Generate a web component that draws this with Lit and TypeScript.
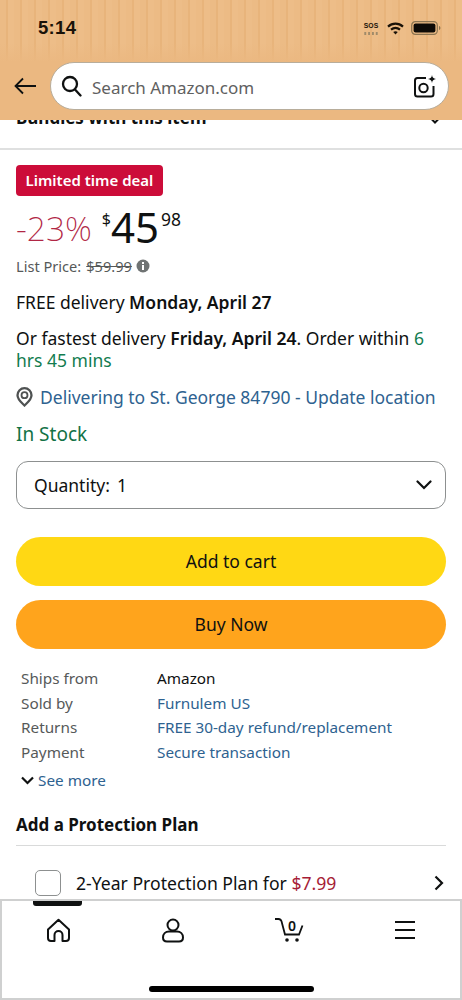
import { LitElement, html, css } from "lit";
import { customElement } from "lit/decorators.js";

@customElement("app-root")
export class AppRoot extends LitElement {
  static styles = css`
    :host { display: block; width: 462px; height: 1000px; overflow: hidden; background: #fff; color: #0f1111;
      font-family: "Noto Sans", "Open Sans", sans-serif; font-size: 18px; }
    * { box-sizing: border-box; }
    .page { height: 1000px; display: flex; flex-direction: column; }
    .head { height: 120px; flex: none; background: #ebb881; display: flex; flex-direction: column; }
    .status { height: 62px; padding: 18px 21px 0 38px; display: flex; justify-content: space-between;
      background: linear-gradient(180deg, transparent 70%, #ebb881 100%), repeating-linear-gradient(90deg, #ecbb85 0 6px, #e8b47b 6px 8px, #edbd88 8px 14px); }
    .time { font: 700 18.5px "Liberation Sans", sans-serif; line-height: 20px; color: #1a1208; letter-spacing: .3px; }
    .sys { display: flex; align-items: center; gap: 7px; height: 20px; }
    .sos { font: 700 8px/8px "Liberation Sans", sans-serif; transform: scaleX(.85); display: flex; flex-direction: column; align-items: center; color: #1a1208; width: 18px; }
    .dots { width: 18px; height: 3px; margin-top: 2px; background: radial-gradient(circle, #a08b6a 1.2px, transparent 1.4px) 0 0 / 4.5px 3px; }
    .search-row { display: flex; align-items: center; padding-left: 14px; gap: 14px; }
    .field { width: 399px; height: 48px; border-radius: 24px; background: #fff; border: 1.5px solid #b8ad9b; display: flex; align-items: center; padding: 0 11px 0 10px; gap: 10px; }
    .ph { flex: 1; color: #5f6161; font-size: 17px; padding-top: 3px; }
    main { flex: 1; min-height: 0; overflow: hidden; }
    .cut { height: 30px; border-bottom: 2px solid #dfe0e0; overflow: hidden; padding: 0 21px 0 16px; display: flex; justify-content: space-between; }
    .cut b { margin-top: -12px; font-size: 17px; line-height: 20px; font-weight: 700; }
    .body { padding: 15px 16px 0; }
    .badge { display: inline-block; background: #cc0c39; color: #fff; font-size: 15px; font-weight: 600; height: 31px; line-height: 31px; padding: 0 9.5px; border-radius: 4px; }
    .price { display: flex; align-items: flex-start; height: 46px; margin-top: 7px; }
    .off { font-size: 33.5px; font-weight: 200; color: #b12745; line-height: 42px; margin-top: 4px; margin-right: 10px; }
    .cur { font-size: 16px; line-height: 18px; margin-top: 7px; margin-right: 0; }
    .big { font-size: 42px; line-height: 46px; margin-top: 1px; }
    .cents { font-size: 17.5px; line-height: 18px; margin-top: 7px; margin-left: 2px; }
    .list { display: flex; align-items: center; margin-top: 7px; font-size: 14.6px; line-height: 20px; color: #565959; gap: 4px; }
    .list s { margin-left: 1px; }
    .line { margin-top: 15px; line-height: 22px; font-size: 17.5px; }
    .line b { font-weight: 600; }
    .line2 { margin-top: 14px; }
    .green { color: #127c4f; }
    .loc { display: flex; align-items: center; gap: 7px; margin-top: 14px; color: #2e6290; font-size: 17.5px; line-height: 24px; white-space: nowrap; }
    .stock { color: #127246; font-size: 19px; line-height: 26px; margin-top: 12px; }
    .qty { margin-top: 14px; height: 48px; border: 1.5px solid #8d9090; border-radius: 12px; display: flex; align-items: center; justify-content: space-between; padding: 0 13px 0 17px; font-size: 17.5px; }
    .qty .lab { padding-bottom: 1px; }
    .qty span span { margin-left: 7px; }
    .btn { height: 49px; border-radius: 25px; display: flex; align-items: center; justify-content: center; font-size: 17.5px; padding-bottom: 2px; }
    .cart { background: #ffd814; margin-top: 28px; }
    .buy { background: #ffa41c; margin-top: 14px; }
    .info { margin-top: 17px; padding-left: 5px; display: grid; grid-template-columns: 136px 1fr; font-size: 15.3px; line-height: 24.5px; }
    .info .k { color: #565959; }
    .link { color: #2e6290; }
    .more { margin: 4px 0 0 5px; display: flex; align-items: center; gap: 4px; font-size: 15.3px; line-height: 24px; color: #2e6290; }
    h2 { margin: 20px 0 0; font-size: 17px; line-height: 26px; font-weight: 700; }
    hr { margin: 7px 0 0; border: 0; height: 1px; background: #d9dada; }
    .plan { display: flex; align-items: center; margin-top: 23px; padding-left: 19px; padding-right: 2px; font-size: 17.6px; height: 28px; }
    .box { width: 26px; height: 26px; border: 1.5px solid #8d9090; border-radius: 5px; margin-right: 15px; flex: none; }
    .plan .t { flex: 1; }
    .red { color: #a61c36; }
    nav { height: 101px; flex: none; border: 2px solid #cfd0d0; background: #fff; position: relative; }
    .ind { position: absolute; left: 31px; top: 0; width: 49px; height: 5px; background: #0f1111; border-radius: 0 0 3px 3px; }
    nav svg { position: absolute; top: 17px; }
    .homebar { position: absolute; left: 147px; top: 85px; width: 165px; height: 6px; border-radius: 3px; background: #000; }
    svg { display: block; flex: none; }
  `;

  render() {
    return html`<div class="page">
      <header class="head">
        <div class="status">
          <span class="time">5:14</span>
          <div class="sys">
            <div class="sos">SOS<div class="dots"></div></div>
            <svg width="17" height="13" viewBox="0 0 17 13" fill="none"><path d="M1 4.600C5.400.6 11.600.6 16 4.600" stroke="#1a1208" stroke-width="2.200"/><path d="M4 7.600c2.700-2.200 6.300-2.200 9 0" stroke="#1a1208" stroke-width="2.200"/><path d="M6.200 9.900 8.500 12.400l2.300-2.500c-1.300-1-3.300-1-4.600 0Z" fill="#1a1208"/></svg>
            <svg width="30" height="14" viewBox="0 0 30 14" fill="none"><rect x=".7" y=".7" width="25.600" height="12.600" rx="3.600" stroke="#8a7350" stroke-width="1.200"/><rect x="2.600" y="2.600" width="21.800" height="8.800" rx="2" fill="#0d0a06"/><path d="M28 5v4c.9-.3 1.400-1 1.400-2s-.5-1.700-1.400-2Z" fill="#8a7350"/></svg>
          </div>
        </div>
        <div class="search-row">
          <svg width="22" height="18" viewBox="0 0 22 18" fill="none" stroke="#0f1111" stroke-width="1.800"><path d="M22 9H1.500M9 1.500 1.500 9 9 16.500"/></svg>
          <div class="field">
            <svg width="21" height="22" viewBox="0 0 21 22" fill="none" stroke="#0f1111" stroke-width="2.300"><circle cx="9" cy="9" r="7"/><path d="m14 14.500 5.500 6" stroke-linecap="round"/></svg>
            <span class="ph">Search Amazon.com</span>
            <svg width="25" height="25" viewBox="0 0 25 25" fill="none"><path d="M14 4H5.500A2.500 2.500 0 0 0 3 6.500V20a2.500 2.500 0 0 0 2.500 2.500H19a2.500 2.500 0 0 0 2.500-2.500V12" stroke="#0f1111" stroke-width="2"/><circle cx="11.500" cy="14" r="4.200" stroke="#0f1111" stroke-width="2"/><path d="M20 1c.4 2.600 1.400 3.600 4 4-2.600.4-3.600 1.400-4 4-.4-2.600-1.400-3.600-4-4 2.600-.4 3.600-1.400 4-4Z" fill="#0f1111"/></svg>
          </div>
        </div>
      </header>
      <main>
        <div class="cut"><b>Bundles with this item</b>
          <svg style="margin-top:-4px" width="12" height="9" viewBox="0 0 12 9" fill="none" stroke="#0f1111" stroke-width="2"><path d="m1 1.500 5 5 5-5"/></svg></div>
        <div class="body">
          <span class="badge">Limited time deal</span>
          <div class="price"><span class="off">-23%</span><span class="cur">$</span><span class="big">45</span><span class="cents">98</span></div>
          <div class="list"><span>List Price:</span><s>$59.99</s>
            <svg width="14" height="14" viewBox="0 0 14 14"><circle cx="7" cy="7" r="6.500" fill="#6f7373"/><rect x="6" y="6" width="2" height="5" fill="#fff"/><rect x="6" y="3" width="2" height="2" fill="#fff"/></svg></div>
          <div class="line">FREE delivery <b>Monday, April 27</b></div>
          <div class="line line2">Or fastest delivery <b>Friday, April 24</b>. Order within <span class="green">6</span> <span class="green">hrs 45 mins</span></div>
          <div class="loc">
            <svg width="17" height="20" viewBox="0 0 17 20" fill="none"><path d="M8.500 1.200a7 7 0 0 0-7 7c0 4.400 4.500 7.800 7 10.300 2.500-2.500 7-5.900 7-10.300a7 7 0 0 0-7-7Z" stroke="#4f5252" stroke-width="2.300"/><circle cx="8.500" cy="8.200" r="3" stroke="#4f5252" stroke-width="1.800"/></svg>
            <span>Delivering to St. George 84790 - Update location</span></div>
          <div class="stock">In Stock</div>
          <div class="qty"><span class="lab">Quantity:<span>1</span></span>
            <svg width="16" height="10" viewBox="0 0 16 10" fill="none" stroke="#0f1111" stroke-width="2.200"><path d="m1.500 1.500 6.500 6.500 6.500-6.500" stroke-linecap="round"/></svg></div>
          <div class="btn cart">Add to cart</div>
          <div class="btn buy">Buy Now</div>
          <div class="info">
            <span class="k">Ships from</span><span>Amazon</span>
            <span class="k">Sold by</span><span class="link">Furnulem US</span>
            <span class="k">Returns</span><span class="link">FREE 30-day refund/replacement</span>
            <span class="k">Payment</span><span class="link">Secure transaction</span>
          </div>
          <div class="more"><svg width="13" height="9" viewBox="0 0 13 9" fill="none" stroke="#0f1111" stroke-width="2.200"><path d="m1 1.500 5.500 5.500 5.500-5.500"/></svg>See more</div>
          <h2>Add a Protection Plan</h2>
          <hr />
          <div class="plan"><span class="box"></span><span class="t">2-Year Protection Plan for <span class="red">$7.99</span></span>
            <svg width="10" height="16" viewBox="0 0 10 16" fill="none" stroke="#0f1111" stroke-width="2.200"><path d="m1.500 1.500 6.500 6.500-6.500 6.500"/></svg></div>
        </div>
      </main>
      <nav>
        <div class="ind"></div>
        <svg style="left:44px" width="25" height="25" viewBox="0 0 25 25" fill="none" stroke="#0f1111" stroke-width="2" stroke-linejoin="round"><path d="M2 11.500 12.500 1.800 23 11.500V20a3 3 0 0 1-3 3h-3.500v-6a4 4 0 0 0-8 0v6H5a3 3 0 0 1-3-3Z"/></svg>
        <svg style="left:160px" width="22" height="25" viewBox="0 0 22 25" fill="none" stroke="#0f1111" stroke-width="2"><circle cx="11" cy="7" r="5.500"/><path d="M1 19.500c0-3.500 2.500-6 6-6h8c3.500 0 6 2.500 6 6 0 2.500-1.500 4-4 4H5c-2.500 0-4-1.500-4-4Z"/></svg>
        <svg style="left:272px;top:16px" width="30" height="26" viewBox="0 0 30 26" fill="none" stroke="#0f1111" stroke-width="1.800"><path d="M1 2h3.500c1.500 0 2.500.8 3 2.300L11 17.500h14l3.500-9"/><circle cx="13" cy="23" r="1.800" fill="#0f1111" stroke="none"/><circle cx="23" cy="23" r="1.800" fill="#0f1111" stroke="none"/><text x="18" y="14" text-anchor="middle" font-size="14" font-weight="600" font-family="Noto Sans" fill="#0f1111" stroke="none">0</text></svg>
        <svg style="left:392px;top:19px" width="22" height="20" viewBox="0 0 22 20" fill="none" stroke="#0f1111" stroke-width="2"><path d="M1 2h20M1 10h20M1 18h20"/></svg>
        <div class="homebar"></div>
      </nav>
    </div>`;
  }
}
